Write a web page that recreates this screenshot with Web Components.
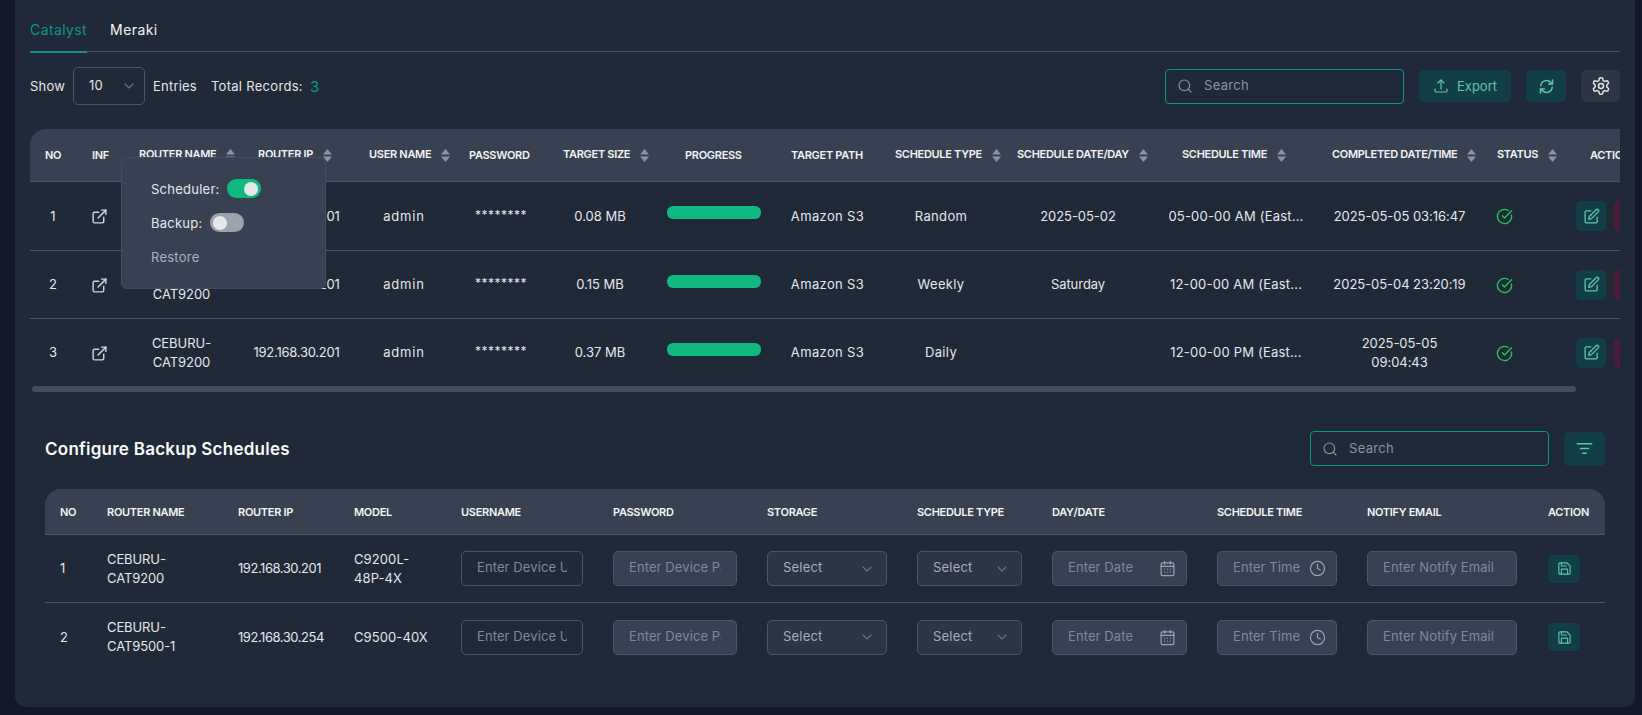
<!DOCTYPE html>
<html lang="en">
<head>
<meta charset="utf-8">
<title>Backup Schedules</title>
<style>
html, body { margin: 0; height: 715px; overflow: hidden; background: #111827; }
body { font-family: Inter, "Noto Sans", sans-serif; color: #e5e7eb; font-size: 13px; }
</style>
</head>
<body>
<app-panel>
  <tab-bar first="Catalyst" second="Meraki"></tab-bar>
  <table-toolbar></table-toolbar>
  <backup-table></backup-table>
  <schedule-section></schedule-section>
</app-panel>

<script>
// stroke icons, all drawn on a 24 box
const ICONS = {
  search: '<circle cx="11" cy="11" r="8"/><path d="m21 21-4.3-4.3"/>',
  chevron: '<path d="m6 9 6 6 6-6"/>',
  upload: '<path d="M3 16.5v2.25A2.25 2.25 0 0 0 5.25 21h13.5A2.25 2.25 0 0 0 21 18.75V16.5"/><path d="M7.5 7.5 12 3l4.5 4.5"/><path d="M12 3v13.5"/>',
  refresh: '<path d="M4 11a8 8 0 0 1 14-4.6L20 8"/><path d="M20.5 3v5.5H15"/><path d="M20 13a8 8 0 0 1-14 4.6L4 16"/><path d="M3.5 21v-5.5H9"/>',
  gear: '<path d="M12.22 2h-.44a2 2 0 0 0-2 2v.18a2 2 0 0 1-1 1.73l-.43.25a2 2 0 0 1-2 0l-.15-.08a2 2 0 0 0-2.73.73l-.22.38a2 2 0 0 0 .73 2.73l.15.1a2 2 0 0 1 1 1.72v.51a2 2 0 0 1-1 1.74l-.15.09a2 2 0 0 0-.73 2.73l.22.38a2 2 0 0 0 2.73.73l.15-.08a2 2 0 0 1 2 0l.43.25a2 2 0 0 1 1 1.73V20a2 2 0 0 0 2 2h.44a2 2 0 0 0 2-2v-.18a2 2 0 0 1 1-1.73l.43-.25a2 2 0 0 1 2 0l.15.08a2 2 0 0 0 2.73-.73l.22-.39a2 2 0 0 0-.73-2.73l-.15-.08a2 2 0 0 1-1-1.74v-.5a2 2 0 0 1 1-1.74l.15-.09a2 2 0 0 0 .73-2.73l-.22-.38a2 2 0 0 0-2.73-.73l-.15.08a2 2 0 0 1-2 0l-.43-.25a2 2 0 0 1-1-1.73V4a2 2 0 0 0-2-2z"/><circle cx="12" cy="12" r="3"/>',
  external: '<path d="M18 13v6a2 2 0 0 1-2 2H5a2 2 0 0 1-2-2V8a2 2 0 0 1 2-2h6"/><path d="M15 3h6v6"/><path d="M10 14 21 3"/>',
  check: '<path d="M21.8 10A10 10 0 1 1 17 3.34"/><path d="m9 11 3 3L22 4"/>',
  edit: '<path d="M11 4H5a2 2 0 0 0-2 2v13a2 2 0 0 0 2 2h13a2 2 0 0 0 2-2v-6"/><path d="M18.5 2.5a2.12 2.12 0 0 1 3 3L12 15l-4 1 1-4z"/>',
  save: '<path d="M15.2 3a2 2 0 0 1 1.4.6l3.8 3.8a2 2 0 0 1 .6 1.4V19a2 2 0 0 1-2 2H5a2 2 0 0 1-2-2V5a2 2 0 0 1 2-2z"/><path d="M17 21v-7a1 1 0 0 0-1-1H8a1 1 0 0 0-1 1v7"/><path d="M7 3v4a1 1 0 0 0 1 1h7"/>',
  filter: '<path d="M3 6h18"/><path d="M7 12h10"/><path d="M10 18h4"/>',
  calendar: '<rect x="3" y="4" width="18" height="18" rx="2"/><path d="M3 9h18"/><path d="M8 2v4"/><path d="M16 2v4"/><path d="M8 13h.01M12 13h.01M16 13h.01M8 17h.01M12 17h.01M16 17h.01"/>',
  clock: '<circle cx="12" cy="12" r="10"/><path d="M12 6v6l4 2"/>'
};

function icon(name, size, width = 2) {
  return `<svg width="${size}" height="${size}" viewBox="0 0 24 24" fill="none" stroke="currentColor" stroke-width="${width}" stroke-linecap="round" stroke-linejoin="round">${ICONS[name]}</svg>`;
}

class AppPanel extends HTMLElement {
  constructor() {
    super();
    this.attachShadow({ mode: "open" });
    this.shadowRoot.innerHTML = `
    <style>
    :host {
      display: block;
      box-sizing: border-box;
      margin-left: 15px;
      width: 1620px;
      height: 707px;
      padding: 0 15px;
      background: #1f2937;
      border-radius: 0 0 10px 10px;
    }
    </style>
    <slot></slot>`;
  }
}

class TabBar extends HTMLElement {
  constructor() {
    super();
    this.attachShadow({ mode: "open" });
  }

  connectedCallback() {
    this.shadowRoot.innerHTML = `
    <style>
    :host {
      display: flex;
      gap: 23px;
      height: 52px;
      box-sizing: border-box;
      border-bottom: 1px solid #4b5563;
      font-size: 14px;
    }
    span { padding-top: 21px; height: 31px; box-sizing: border-box; line-height: 18px; letter-spacing: .4px; color: #f3f4f6; }
    .active { color: #0d9488; border-bottom: 2px solid #0d9488; height: 53px; box-sizing: border-box; }
    </style>
    <span class="active">${this.getAttribute("first")}</span>
    <span>${this.getAttribute("second")}</span>`;
  }
}

class SelectBox extends HTMLElement {
  constructor() {
    super();
    this.attachShadow({ mode: "open" });
    this.shadowRoot.innerHTML = `
    <style>
    :host {
      display: flex;
      align-items: center;
      justify-content: space-between;
      box-sizing: border-box;
      height: 35px;
      padding: 0 11px 2px 15px;
      border: 1px solid #4b5563;
      border-radius: 5px;
      background: #2b3543;
      color: #a7adb7;
      letter-spacing: .2px;
    }
    :host([plain]) { background: transparent; color: #e5e7eb; height: 38px; width: 72px; padding-right: 7px; }
    svg { color: #6b7280; margin-top: 2px; }
    </style>
    <slot></slot>${icon("chevron", 16, 1.6)}`;
  }
}

class SearchBox extends HTMLElement {
  constructor() {
    super();
    this.attachShadow({ mode: "open" });
    this.shadowRoot.innerHTML = `
    <style>
    :host {
      display: flex;
      align-items: center;
      gap: 11px;
      box-sizing: border-box;
      width: 239px;
      height: 35px;
      padding: 0 11px;
      border: 1px solid #0d9488;
      border-radius: 4px;
      color: #8a94a3;
      letter-spacing: .3px;
    }
    span { padding-bottom: 2px; }
    </style>
    ${icon("search", 16, 1.7)}<span><slot></slot></span>`;
  }
}

class IconBtn extends HTMLElement {
  constructor() {
    super();
    this.attachShadow({ mode: "open" });
  }

  connectedCallback() {
    const name = this.getAttribute("icon");
    const size = this.getAttribute("size") || 18;
    const stroke = this.getAttribute("stroke") || 1.8;
    this.shadowRoot.innerHTML = `
    <style>
    :host {
      display: inline-flex;
      align-items: center;
      justify-content: center;
      gap: 8px;
      box-sizing: border-box;
      height: 32px;
      border-radius: 5px;
      background: #123f45;
      color: #5ec4b8;
      letter-spacing: 0;
    }
    :host([tone="gray"]) { background: #2d3644; color: #e5e7eb; }
    :host([tone="red"]) { background: #4c1d3a; }
    </style>
    ${name ? icon(name, size, stroke) : ""}<slot></slot>`;
  }
}

class SortArrows extends HTMLElement {
  constructor() {
    super();
    this.attachShadow({ mode: "open" });
    this.shadowRoot.innerHTML = `
    <style>
    :host { display: inline-block; width: 9px; height: 13px; margin-left: 10px; vertical-align: middle; }
    svg { display: block; }
    </style>
    <svg width="9" height="13" viewBox="0 0 9 13" fill="#8b93a1"><path d="M4.5 0 9 5.4H0z"/><path d="M0 7.6h9L4.5 13z"/></svg>`;
  }
}

class ToggleSwitch extends HTMLElement {
  constructor() {
    super();
    this.attachShadow({ mode: "open" });
    this.shadowRoot.innerHTML = `
    <style>
    :host {
      display: flex;
      align-items: center;
      box-sizing: border-box;
      width: 34px;
      height: 19px;
      padding: 0 3px;
      border-radius: 10px;
      background: #9ca3af;
    }
    :host([on]) { background: #10b981; justify-content: flex-end; }
    i { width: 14px; height: 14px; border-radius: 50%; background: #e5e7eb; }
    </style>
    <i></i>`;
  }
}

class TextField extends HTMLElement {
  constructor() {
    super();
    this.attachShadow({ mode: "open" });
  }

  connectedCallback() {
    const name = this.getAttribute("icon");
    this.shadowRoot.innerHTML = `
    <style>
    :host {
      display: flex;
      align-items: center;
      gap: 4px;
      box-sizing: border-box;
      height: 35px;
      padding: 0 15px;
      border: 1px solid #4b5563;
      border-radius: 5px;
      background: #374151;
      color: #7f8a99;
      letter-spacing: .1px;
    }
    :host([plain]) { background: transparent; }
    :host([icon]) { padding-right: 10px; }
    div { flex: 1; min-width: 0; overflow: hidden; white-space: nowrap; padding-bottom: 2px; }
    svg { flex: none; color: #9ca3af; }
    </style>
    <div><slot></slot></div>${name ? icon(name, 17, 1.7) : ""}`;
  }
}

class TableToolbar extends HTMLElement {
  constructor() {
    super();
    this.attachShadow({ mode: "open" });
    this.shadowRoot.innerHTML = `
    <style>
    :host {
      display: flex;
      align-items: center;
      height: 38px;
      margin: 15px 0 24px;
      letter-spacing: .2px;
      color: #e5e7eb;
    }
    .show { margin-right: 8px; }
    .entries { margin: 0 14px 0 8px; }
    .total { letter-spacing: .3px; }
    b { margin-left: 7px; color: #0d9488; font-weight: 400; font-size: 15px; }
    search-box { margin-left: auto; }
    .export { width: 92px; margin-left: 15px; }
    .square { width: 40px; margin-left: 15px; }
    .last { width: 39px; }
    </style>
    <span class="show">Show</span>
    <select-box plain>10</select-box>
    <span class="entries">Entries</span>
    <span class="total">Total Records:</span><b>3</b>
    <search-box>Search</search-box>
    <icon-btn class="export" icon="upload" size="16">Export</icon-btn>
    <icon-btn class="square" icon="refresh" size="17" stroke="2.2"></icon-btn>
    <icon-btn class="square last" icon="gear" tone="gray" size="20"></icon-btn>`;
  }
}

// w = column width, p = header text start inside the column
const BACKUP_COLUMNS = [
  { t: "No", w: 46, p: 15 },
  { t: "Inf", w: 47, p: 16 },
  { t: "Router Name", w: 117, p: 16, sort: true },
  { t: "Router IP", w: 113, p: 18, sort: true },
  { t: "User Name", w: 102, p: 16, sort: true },
  { t: "Password", w: 90, p: 14 },
  { t: "Target Size", w: 115, p: 18, sort: true },
  { t: "Progress", w: 108, p: 25 },
  { t: "Target Path", w: 119, p: 23 },
  { t: "Schedule Type", w: 108, p: 8, sort: true },
  { t: "Schedule Date/Day", w: 166, p: 22, sort: true },
  { t: "Schedule Time", w: 150, p: 21, sort: true },
  { t: "Completed Date/Time", w: 177, p: 21, sort: true },
  { t: "Status", w: 82, p: 9, sort: true },
  { t: "Action", w: 90, p: 20 }
];

const BACKUP_ROWS = [
  ["1", "0.08 MB", "Random", "2025-05-02", "05-00-00 AM (East...", "2025-05-05 03:16:47"],
  ["2", "0.15 MB", "Weekly", "Saturday", "12-00-00 AM (East...", "2025-05-04 23:20:19"],
  ["3", "0.37 MB", "Daily", "", "12-00-00 PM (East...", "2025-05-05<br>09:04:43"]
];

class BackupTable extends HTMLElement {
  constructor() {
    super();
    this.attachShadow({ mode: "open" });
  }

  connectedCallback() {
    const cols = BACKUP_COLUMNS.map(c => `<col style="width:${c.w}px">`).join("");
    const head = BACKUP_COLUMNS.map(c =>
      `<th style="padding-left:${c.p}px">${c.t}${c.sort ? "<sort-arrows></sort-arrows>" : ""}</th>`).join("");
    const rows = BACKUP_ROWS.map(r => `
      <tr>
        <td>${r[0]}</td>
        <td class="ext">${icon("external", 17, 2)}</td>
        <td class="tight">CEBURU-<br>CAT9200</td>
        <td class="num">192.168.30.201</td>
        <td class="wide">admin</td>
        <td class="stars">********</td>
        <td class="size">${r[1]}</td>
        <td><div class="bar"></div></td>
        <td class="word">Amazon S3</td>
        <td class="word">${r[2]}</td>
        <td class="tight">${r[3]}</td>
        <td class="nowrap">${r[4]}</td>
        <td class="tight">${r[5]}</td>
        <td class="status">${icon("check", 17, 2)}</td>
        <td><div class="actions"><icon-btn icon="edit" size="17" style="width:30px;height:30px"></icon-btn><icon-btn tone="red" style="width:30px;height:30px"></icon-btn></div></td>
      </tr>`).join("");
    this.shadowRoot.innerHTML = `
    <style>
    :host { display: block; position: relative; height: 263px; }
    .scroller { overflow: hidden; width: 1590px; }
    table { table-layout: fixed; width: 1630px; border-collapse: separate; border-spacing: 0; letter-spacing: .2px; }
    th {
      height: 53px;
      padding: 0 0 1px;
      box-sizing: border-box;
      text-align: left;
      white-space: nowrap;
      font-size: 11px;
      font-weight: 600;
      letter-spacing: -.3px;
      text-transform: uppercase;
      color: #f3f4f6;
      background: #384152;
      border-bottom: 1px solid #4b5563;
    }
    th:first-child { border-top-left-radius: 16px; }
    td {
      height: 68px;
      padding: 0;
      box-sizing: border-box;
      text-align: center;
      line-height: 19px;
      color: #e5e7eb;
      border-bottom: 1px solid #4b5563;
    }
    tr:first-child td { height: 69px; }
    tr:last-child td { border-bottom: 0; height: 67px; }
    .ext { color: #d1d5db; }
    .ext svg, .status svg { display: inline-block; vertical-align: middle; }
    .num { letter-spacing: -.25px; }
    .tight { letter-spacing: -.05px; }
    .wide { letter-spacing: .8px; }
    .word { letter-spacing: .35px; }
    .stars { font-size: 12px; padding: 0 0 4px 2px; letter-spacing: .5px; }
    .size { padding-right: 5px; letter-spacing: 0; }
    .nowrap { white-space: nowrap; }
    .bar { width: 94px; height: 13px; margin: -7px auto 0; border-radius: 6px; background: #10b981; }
    .status { text-align: left; padding-left: 8px; color: #22c55e; }
    .actions { display: flex; gap: 8px; padding-left: 6px; }
    .track { height: 6px; width: 1544px; margin-left: 2px; border-radius: 3px; background: #434d5b; }
    </style>
    <div class="scroller">
      <table><colgroup>${cols}</colgroup><thead><tr>${head}</tr></thead><tbody>${rows}</tbody></table>
    </div>
    <div class="track"></div>
    <action-popover></action-popover>`;
  }
}

class ActionPopover extends HTMLElement {
  constructor() {
    super();
    this.attachShadow({ mode: "open" });
    this.shadowRoot.innerHTML = `
    <style>
    :host {
      position: absolute;
      left: 91px;
      top: 28px;
      box-sizing: border-box;
      width: 205px;
      height: 132px;
      padding: 21px 29px 0;
      display: flex;
      flex-direction: column;
      gap: 15px;
      background: #384152;
      border: 1px solid #434d5e;
      border-radius: 6px;
      color: #e5e7eb;
      letter-spacing: .25px;
    }
    div { display: flex; align-items: center; gap: 7px; height: 19px; }
    .muted { color: #aab0ba; }
    </style>
    <div>Scheduler: <toggle-switch on></toggle-switch></div>
    <div>Backup: <toggle-switch></toggle-switch></div>
    <div class="muted">Restore</div>`;
  }
}

const SCHEDULE_WIDTHS = [62, 131, 116, 107, 152, 154, 150, 135, 165, 150, 181, 57];
const SCHEDULE_HEADS = ["No", "Router Name", "Router IP", "Model", "Username", "Password", "Storage", "Schedule Type", "Day/Date", "Schedule Time", "Notify Email", "Action"];
const SCHEDULE_ROWS = [
  ["1", "CEBURU-<br>CAT9200", "192.168.30.201", "C9200L-<br>48P-4X"],
  ["2", "CEBURU-<br>CAT9500-1", "192.168.30.254", "C9500-40X"]
];

class ScheduleSection extends HTMLElement {
  constructor() {
    super();
    this.attachShadow({ mode: "open" });
  }

  connectedCallback() {
    const cols = SCHEDULE_WIDTHS.map(w => `<col style="width:${w}px">`).join("");
    const head = SCHEDULE_HEADS.map(h => `<th>${h}</th>`).join("");
    const rows = SCHEDULE_ROWS.map(r => `
      <tr>
        <td>${r[0]}</td><td class="tight">${r[1]}</td><td class="num">${r[2]}</td><td>${r[3]}</td>
        <td><text-field plain style="width:122px">Enter Device Username</text-field></td>
        <td><text-field style="width:124px">Enter Device Password</text-field></td>
        <td><select-box style="width:120px">Select</select-box></td>
        <td><select-box style="width:105px">Select</select-box></td>
        <td><text-field icon="calendar" style="width:135px">Enter Date</text-field></td>
        <td><text-field icon="clock" style="width:120px">Enter Time</text-field></td>
        <td><text-field style="width:150px">Enter Notify Email</text-field></td>
        <td><icon-btn icon="save" size="15" style="width:32px;height:28px"></icon-btn></td>
      </tr>`).join("");
    this.shadowRoot.innerHTML = `
    <style>
    :host { display: block; padding: 39px 15px 0; }
    header { display: flex; align-items: center; height: 35px; margin-bottom: 23px; }
    h2 { margin: 0 auto 0 0; font-size: 17px; font-weight: 600; color: #f9fafb; letter-spacing: .25px; }
    .filter { width: 41px; height: 34px; margin-left: 15px; }
    table { table-layout: fixed; width: 1560px; border-collapse: separate; border-spacing: 0; letter-spacing: .1px; }
    th {
      height: 46px;
      padding: 0;
      box-sizing: border-box;
      text-align: left;
      white-space: nowrap;
      font-size: 11px;
      font-weight: 600;
      letter-spacing: -.3px;
      text-transform: uppercase;
      color: #f3f4f6;
      background: #384152;
      border-bottom: 1px solid #4b5563;
    }
    th:first-child { border-top-left-radius: 16px; padding-left: 15px; }
    th:last-child { border-top-right-radius: 16px; }
    td {
      height: 68px;
      padding: 0;
      box-sizing: border-box;
      line-height: 19px;
      color: #e5e7eb;
      border-bottom: 1px solid #4b5563;
    }
    td:first-child { padding-left: 15px; }
    tr:last-child td { border-bottom: 0; }
    .tight { letter-spacing: -.1px; }
    .num { letter-spacing: -.45px; }
    </style>
    <header>
      <h2>Configure Backup Schedules</h2>
      <search-box>Search</search-box>
      <icon-btn class="filter" icon="filter" size="19" stroke="2"></icon-btn>
    </header>
    <table><colgroup>${cols}</colgroup><thead><tr>${head}</tr></thead><tbody>${rows}</tbody></table>`;
  }
}

customElements.define("app-panel", AppPanel);
customElements.define("tab-bar", TabBar);
customElements.define("select-box", SelectBox);
customElements.define("search-box", SearchBox);
customElements.define("icon-btn", IconBtn);
customElements.define("sort-arrows", SortArrows);
customElements.define("toggle-switch", ToggleSwitch);
customElements.define("text-field", TextField);
customElements.define("table-toolbar", TableToolbar);
customElements.define("backup-table", BackupTable);
customElements.define("action-popover", ActionPopover);
customElements.define("schedule-section", ScheduleSection);
</script>
</body>
</html>
